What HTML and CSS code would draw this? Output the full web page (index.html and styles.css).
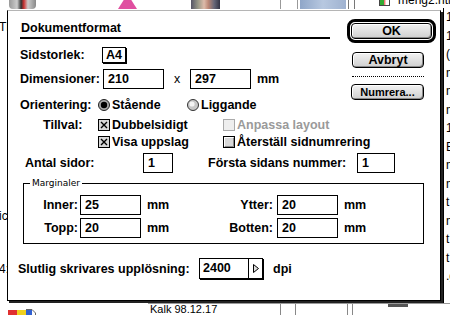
FILE: index.html
```html
<!DOCTYPE html>
<html lang="sv">

<head>
  <meta charset="UTF-8">
  <title>Dokumentformat</title>
  <link rel="stylesheet" href="styles.css">
</head>

<body>
  <div class="desktop">
    <!-- bitar av skrivbordet runt dialogen -->
    <div class="bg bg-icon-cat"></div>
    <div class="bg bg-icon-pink"></div>
    <div class="bg bg-icon-photo"></div>
    <div class="bg bg-lines-a"></div>
    <div class="bg bg-picture"></div>
    <div class="bg bg-lines-b"></div>
    <div class="bg bg-file-icon"></div>
    <div class="bg bg-file-name">meng2.htm</div>

    <div class="bg bg-left">
      <span class="left-tf">TF</span>
      <span class="left-ic">ic</span>
      <span class="left-4">4:</span>
    </div>

    <div class="bg bg-right">
      <span>1</span><span>1</span><span>(</span><span>m</span><span>m</span><span>m</span><span>1</span><span>E</span>
      <span>m</span><span>m</span><span>t</span><span>m</span><span>t</span><span>t</span><span>.g</span>
    </div>

    <div class="bg bg-bottom-icon">
      <svg width="28" height="10" viewBox="0 0 28 10">
        <rect x="0" y="1" width="9" height="9" fill="#e03030" />
        <rect x="9" y="1" width="9" height="9" fill="#f0d020" />
        <rect x="18" y="1" width="6" height="9" fill="#3060d0" />
        <path d="M18 0.5H24L27.5 4V10" fill="none" stroke="#666" />
      </svg>
    </div>
    <div class="bg bg-bottom-win">
      <span class="kalk">Kalk 98.12.17</span>
      <span class="bw-col bw-col-1"></span>
      <span class="bw-col bw-col-2"></span>
      <span class="bw-col bw-col-3"></span>
      <span class="bw-col bw-col-4"></span>
      <span class="bw-dark"></span>
    </div>

    <div class="dialog">
      <div class="top">
        <div class="main">
          <div class="title">Dokumentformat</div>

          <div class="row row-size">
            <span class="label-size">Sidstorlek:</span>
            <span class="popup-small">A4</span>
          </div>

          <div class="row row-dim">
            <span class="label-dim">Dimensioner:</span>
            <span class="field field-dim">210</span>
            <span class="times">x</span>
            <span class="field field-dim">297</span>
            <span class="unit">mm</span>
          </div>

          <div class="row row-orient">
            <span class="label-orient">Orientering:</span>
            <span class="choice choice-first">
              <svg class="radio" width="12" height="12" viewBox="0 0 12 12">
                <circle cx="6" cy="6" r="5.5" fill="#aaa" stroke="#222" />
                <circle cx="6" cy="6" r="3.2" fill="#000" />
              </svg>
              Stående
            </span>
            <span class="choice">
              <svg class="radio" width="12" height="12" viewBox="0 0 12 12">
                <circle cx="6" cy="6" r="5.5" fill="#c8c8c8" stroke="#333" />
                <circle cx="5" cy="5" r="2.6" fill="#fff" opacity="0.8" />
              </svg>
              Liggande
            </span>
          </div>
        </div>

        <div class="buttons">
          <div class="default-ring">
            <button class="btn btn-ok" type="button">OK</button>
          </div>
          <button class="btn btn-cancel" type="button">Avbryt</button>
          <div class="dots"></div>
          <button class="btn btn-number" type="button">Numrera...</button>
        </div>
      </div>

      <div class="row row-opt">
        <span class="label-opt">Tillval:</span>
        <span class="choice choice-wide">
          <svg class="check" width="12" height="12" viewBox="0 0 12 12">
            <rect x="0.5" y="0.5" width="11" height="11" fill="#d8d8d8" stroke="#000" />
            <path d="M3 3L9 9M9 3L3 9" stroke="#000" stroke-width="1.4" />
          </svg>
          Dubbelsidigt
        </span>
        <span class="choice disabled">
          <svg class="check" width="12" height="12" viewBox="0 0 12 12">
            <rect x="0.5" y="0.5" width="11" height="11" fill="#eee" stroke="#aaa" />
          </svg>
          Anpassa layout
        </span>
      </div>

      <div class="row row-opt row-opt-2">
        <span class="choice choice-wide">
          <svg class="check" width="12" height="12" viewBox="0 0 12 12">
            <rect x="0.5" y="0.5" width="11" height="11" fill="#d8d8d8" stroke="#000" />
            <path d="M3 3L9 9M9 3L3 9" stroke="#000" stroke-width="1.4" />
          </svg>
          Visa uppslag
        </span>
        <span class="choice">
          <svg class="check" width="12" height="12" viewBox="0 0 12 12">
            <rect x="0.5" y="0.5" width="11" height="11" fill="#d8d8d8" stroke="#000" />
            <path d="M1.5 10V1.5H10" fill="none" stroke="#fff" />
            <path d="M2 10.5H10.5V2" fill="none" stroke="#888" />
          </svg>
          Återställ sidnumrering
        </span>
      </div>

      <div class="row row-pages">
        <span class="label-pages">Antal sidor:</span>
        <span class="field field-pages">1</span>
        <span class="label-first">Första sidans nummer:</span>
        <span class="field field-first">1</span>
      </div>

      <fieldset class="margins">
        <legend>Marginaler</legend>
        <div class="mrow">
          <span class="mlabel">Inner:</span>
          <span class="field field-m">25</span>
          <span class="unit unit-m">mm</span>
          <span class="mlabel mlabel-right">Ytter:</span>
          <span class="field field-m">20</span>
          <span class="unit">mm</span>
        </div>
        <div class="mrow">
          <span class="mlabel">Topp:</span>
          <span class="field field-m">20</span>
          <span class="unit unit-m">mm</span>
          <span class="mlabel mlabel-right">Botten:</span>
          <span class="field field-m">20</span>
          <span class="unit">mm</span>
        </div>
      </fieldset>

      <div class="row row-res">
        <span class="label-res">Slutlig skrivares upplösning:</span>
        <span class="popup">
          <span class="popup-value">2400</span>
          <span class="popup-arrow">
            <svg width="6" height="9" viewBox="0 0 6 9">
              <polygon points="0.5,0.5 5.5,4.5 0.5,8.5" fill="#ddd" stroke="#000" />
            </svg>
          </span>
        </span>
        <span class="unit unit-dpi">dpi</span>
      </div>
    </div>
  </div>
</body>

</html>
```

FILE: styles.css
```css
body {
  margin: 0;
  background: #fff;
  color: #000;
  font-family: "Liberation Sans", Arial, sans-serif;
}

.desktop {
  position: relative;
  width: 450px;
  height: 315px;
  overflow: hidden;
  background: #fff;
}

/* skrivbordet bakom */
.bg {
  position: absolute;
}

.bg-icon-cat {
  left: 9px;
  top: 0;
  width: 27px;
  height: 9px;
  background: linear-gradient(90deg, #999 0, #ccc 30%, #333 45%, #c33 55%, #ccc 70%, #888 100%);
  border-radius: 0 0 4px 4px;
}

.bg-icon-pink {
  left: 118px;
  top: 0;
  width: 19px;
  height: 9px;
  background: radial-gradient(#e04fa0 1px, #f7b6d8 1px) 0 0 / 2px 2px;
  clip-path: polygon(30% 0, 70% 0, 100% 100%, 0 100%);
}

.bg-icon-photo {
  left: 191px;
  top: 0;
  width: 29px;
  height: 9px;
  background: linear-gradient(90deg, #556 0, #998 25%, #dba 45%, #b87 60%, #667 80%, #334 100%);
}

.bg-lines-a {
  left: 280px;
  top: 0;
  width: 16px;
  height: 9px;
  border-left: 1px solid #999;
  border-right: 1px solid #999;
}

.bg-picture {
  left: 300px;
  top: 0;
  width: 46px;
  height: 9px;
  background: linear-gradient(90deg, #8fa6c8, #b7c8e0 50%, #9fb2d0);
}

.bg-lines-b {
  left: 348px;
  top: 0;
  width: 5px;
  height: 9px;
  border-left: 1px solid #777;
  border-right: 1px solid #777;
}

.bg-file-icon {
  left: 379px;
  top: 0;
  width: 9px;
  height: 5px;
  background: linear-gradient(90deg, #3a3 0, #3a3 40%, #e33 40%, #fff 70%);
  border: 1px solid #444;
  border-top: 0;
}

.bg-file-name {
  left: 398px;
  top: -7px;
  font-size: 12px;
}

.bg-left {
  left: 0;
  top: 0;
  width: 7px;
  height: 315px;
  overflow: hidden;
  font-size: 12px;
}

.bg-left span {
  position: absolute;
  left: -1px;
}

.left-tf {
  top: 20px;
}

.left-ic {
  top: 209px;
}

.left-4 {
  top: 262px;
}

.bg-right {
  left: 443px;
  top: 8px;
  width: 7px;
  height: 295px;
  overflow: hidden;
  display: flex;
  flex-direction: column;
  font-size: 12px;
  line-height: 18.5px;
  padding-left: 2px;
  box-sizing: border-box;
  border-left: 1px solid #000;
}

.bg-bottom-icon {
  left: 8px;
  top: 305px;
}

.bg-bottom-win {
  left: 148px;
  top: 303px;
  width: 302px;
  height: 12px;
  border-top: 1px solid #999;
  font-size: 11px;
  line-height: 11px;
}

.kalk {
  margin-left: 2px;
}

.bw-col {
  position: absolute;
  top: 0;
  height: 12px;
  border-left: 1px solid #888;
}

.bw-col-1 {
  left: 132px;
}

.bw-col-2 {
  left: 147px;
}

.bw-col-3 {
  left: 199px;
}

.bw-col-4 {
  left: 204px;
}

.bw-dark {
  position: absolute;
  left: 240px;
  top: 0;
  width: 20px;
  height: 3px;
  background: #555;
}

/* dialogen */
.dialog {
  position: absolute;
  left: 7px;
  top: 10px;
  width: 434px;
  height: 291px;
  box-sizing: border-box;
  padding: 9px 0 0 12px;
  background: #fff;
  border: 1px solid #000;
  border-top-color: #b5b5b5;
  box-shadow: 2px 2px 0 #222;
  font-size: 12.5px;
  font-weight: bold;
  line-height: 16px;
}

.top {
  display: flex;
}

.main {
  width: 310px;
}

.title {
  height: 17px;
  padding-left: 1px;
  border-bottom: 2px solid #000;
}

.row {
  display: flex;
  align-items: center;
  white-space: nowrap;
}

.row-size {
  height: 16px;
  margin-top: 8px;
}

.label-size {
  width: 82px;
}

.popup-small {
  width: 24px;
  height: 16px;
  box-sizing: border-box;
  border: 1px solid #000;
  box-shadow: 1px 1px 0 #000;
  text-align: center;
  line-height: 14px;
}

.row-dim {
  height: 20px;
  margin-top: 6px;
}

.label-dim {
  width: 83px;
}

.field {
  height: 20px;
  box-sizing: border-box;
  border: 1px solid #000;
  padding-left: 4px;
  line-height: 18px;
}

.field-dim {
  width: 61px;
}

.times {
  width: 16px;
  margin-left: 10px;
  font-weight: normal;
}

.unit {
  margin-left: 6px;
}

.row-orient {
  height: 16px;
  margin-top: 8px;
}

.label-orient {
  width: 78px;
}

.choice {
  display: flex;
  align-items: center;
  gap: 2px;
}

.choice-first {
  width: 89px;
}

.choice-wide {
  width: 125px;
}

.disabled {
  color: #9a9a9a;
}

/* knappar */
.buttons {
  display: flex;
  flex-direction: column;
  align-items: flex-start;
  margin-left: 17px;
}

.default-ring {
  width: 89px;
  height: 24px;
  margin-top: -1px;
  box-sizing: border-box;
  border: 3px solid #000;
  border-radius: 8px;
  padding: 1px;
}

.btn {
  display: block;
  height: 16px;
  box-sizing: border-box;
  padding: 0;
  border: 1px solid #000;
  border-radius: 4px;
  background: linear-gradient(#f2f2f2, #cfcfcf);
  box-shadow: inset 1px 1px 0 #fff, inset -1px -1px 0 #8a8a8a;
  color: #000;
  font-family: inherit;
  font-size: 12.5px;
  font-weight: bold;
  line-height: 14px;
  text-align: center;
}

.btn-ok {
  width: 100%;
  height: 100%;
}

.btn-cancel {
  width: 72px;
  margin-top: 9px;
  margin-left: 5px;
}

.dots {
  width: 72px;
  margin-top: 8px;
  margin-left: 5px;
  border-top: 1px dotted #000;
}

.btn-number {
  width: 73px;
  margin-top: 7px;
  margin-left: 4px;
  font-size: 11px;
}

/* tillval */
.row-opt {
  height: 16px;
  margin-top: 4px;
}

.row-opt-2 {
  margin-top: 1px;
  padding-left: 78px;
}

.label-opt {
  width: 55px;
  padding-left: 23px;
}

.row-pages {
  height: 20px;
  margin-top: 3px;
}

.label-pages {
  width: 118px;
  padding-left: 5px;
}

.field-pages {
  width: 30px;
}

.label-first {
  width: 149px;
  margin-left: 35px;
}

.field-first {
  width: 38px;
}

/* marginaler */
.margins {
  width: 401px;
  min-width: 0;
  box-sizing: border-box;
  margin: 5px 0 0 3px;
  padding: 6px 0 5px 0;
  border: 1px solid #000;
}

.margins legend {
  margin-left: 6px;
  padding: 0 2px;
  font-family: "DejaVu Sans", Verdana, sans-serif;
  font-size: 9px;
  font-weight: normal;
  line-height: 11px;
}

.mrow {
  display: flex;
  align-items: center;
  height: 20px;
  white-space: nowrap;
}

.mrow + .mrow {
  margin-top: 3px;
}

.mlabel {
  width: 54px;
  padding-right: 2px;
  text-align: right;
}

.field-m {
  width: 61px;
}

.unit-m {
  width: 30px;
}

.mlabel-right {
  width: 96px;
  padding-right: 4px;
}

/* upplösning */
.row-res {
  height: 21px;
  margin-top: 14px;
  margin-left: -2px;
}

.label-res {
  width: 181px;
}

.popup {
  display: flex;
  width: 64px;
  height: 21px;
  box-sizing: border-box;
  border: 1px solid #000;
  box-shadow: 1px 1px 0 #000;
}

.popup-value {
  width: 49px;
  box-sizing: border-box;
  padding-left: 3px;
  border-right: 1px solid #000;
  line-height: 19px;
}

.popup-arrow {
  flex: 1;
  display: flex;
  align-items: center;
  justify-content: center;
}

.unit-dpi {
  margin-left: 10px;
}
```
